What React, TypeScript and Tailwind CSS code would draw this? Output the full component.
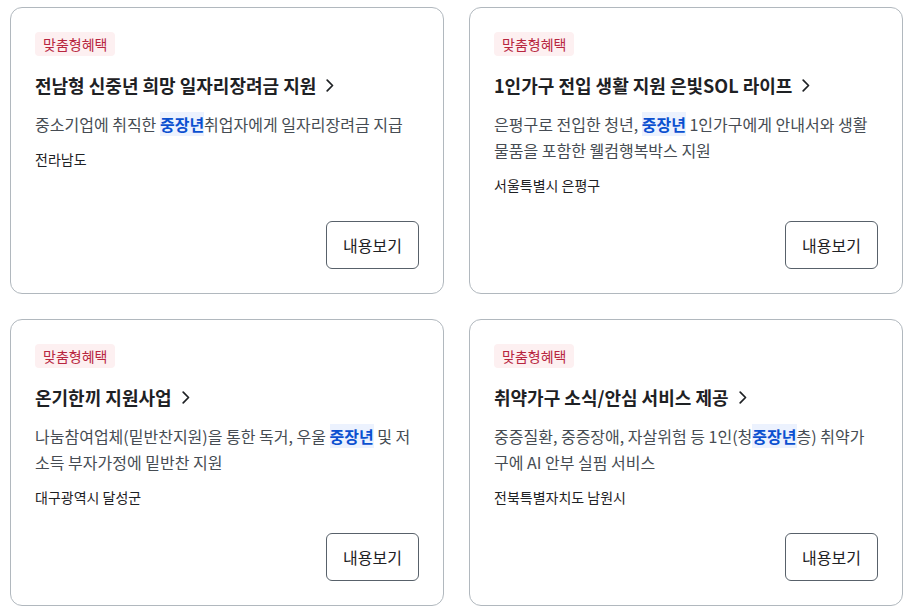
import type { ReactNode } from "react";

type Benefit = {
  title: string;
  desc: ReactNode;
  region: string;
};

const Hl = ({ children }: { children: ReactNode }) => (
  <span className="bg-[#ecf2fe] font-bold text-[#0b50d0]">{children}</span>
);

const benefits: Benefit[] = [
  {
    title: "전남형 신중년 희망 일자리장려금 지원",
    desc: (
      <>
        중소기업에 취직한 <Hl>중장년</Hl>취업자에게 일자리장려금 지급
      </>
    ),
    region: "전라남도",
  },
  {
    title: "1인가구 전입 생활 지원 은빛SOL 라이프",
    desc: (
      <>
        은평구로 전입한 청년, <Hl>중장년</Hl> 1인가구에게 안내서와 생활 물품을 포함한 웰컴행복박스 지원
      </>
    ),
    region: "서울특별시 은평구",
  },
  {
    title: "온기한끼 지원사업",
    desc: (
      <>
        나눔참여업체(밑반찬지원)을 통한 독거, 우울 <Hl>중장년</Hl> 및 저소득 부자가정에 밑반찬 지원
      </>
    ),
    region: "대구광역시 달성군",
  },
  {
    title: "취약가구 소식/안심 서비스 제공",
    desc: (
      <>
        중증질환, 중증장애, 자살위험 등 1인(청<Hl>중장년</Hl>층) 취약가구에 AI 안부 실핌 서비스
      </>
    ),
    region: "전북특별자치도 남원시",
  },
];

const Chevron = () => (
  <svg width="8" height="13" viewBox="0 0 8 13" fill="none" className="shrink-0">
    <path d="M1.2 1.2 L6.5 6.5 L1.2 11.8" stroke="currentColor" strokeWidth="1.7" strokeLinecap="round" strokeLinejoin="round" />
  </svg>
);

const BenefitCard = ({ item }: { item: Benefit }) => (
  <div className="flex h-[287px] flex-col rounded-xl border border-[#b1b8be] bg-white p-6">
    <span className="self-start rounded bg-[#fdf0f1] px-2 text-[14px] leading-6 text-[#b8263f]">맞춤형혜택</span>
    <a href="#" className="mt-4 flex items-center gap-[10px] text-[18px] font-bold leading-[26px] text-[#1e2124]">
      <span>{item.title}</span>
      <Chevron />
    </a>
    <p className="mt-[13px] text-[16px] leading-[26px] text-[#464c53]">{item.desc}</p>
    <p className="mt-3 text-[14px] leading-5 text-[#1e2124]">{item.region}</p>
    <button
      type="button"
      className="mt-auto self-end rounded-md border border-[#58616a] px-4 text-[16px] leading-[46px] text-[#1e2124]"
    >
      내용보기
    </button>
  </div>
);

export default function App() {
  return (
    <div className="min-h-screen bg-white pl-[10px] pt-[7px] font-['Noto_Sans_CJK_KR','Noto_Sans',sans-serif]">
      <div className="grid grid-cols-[434px_434px] gap-[25px]">
        {benefits.map((item) => (
          <BenefitCard key={item.title} item={item} />
        ))}
      </div>
    </div>
  );
}
